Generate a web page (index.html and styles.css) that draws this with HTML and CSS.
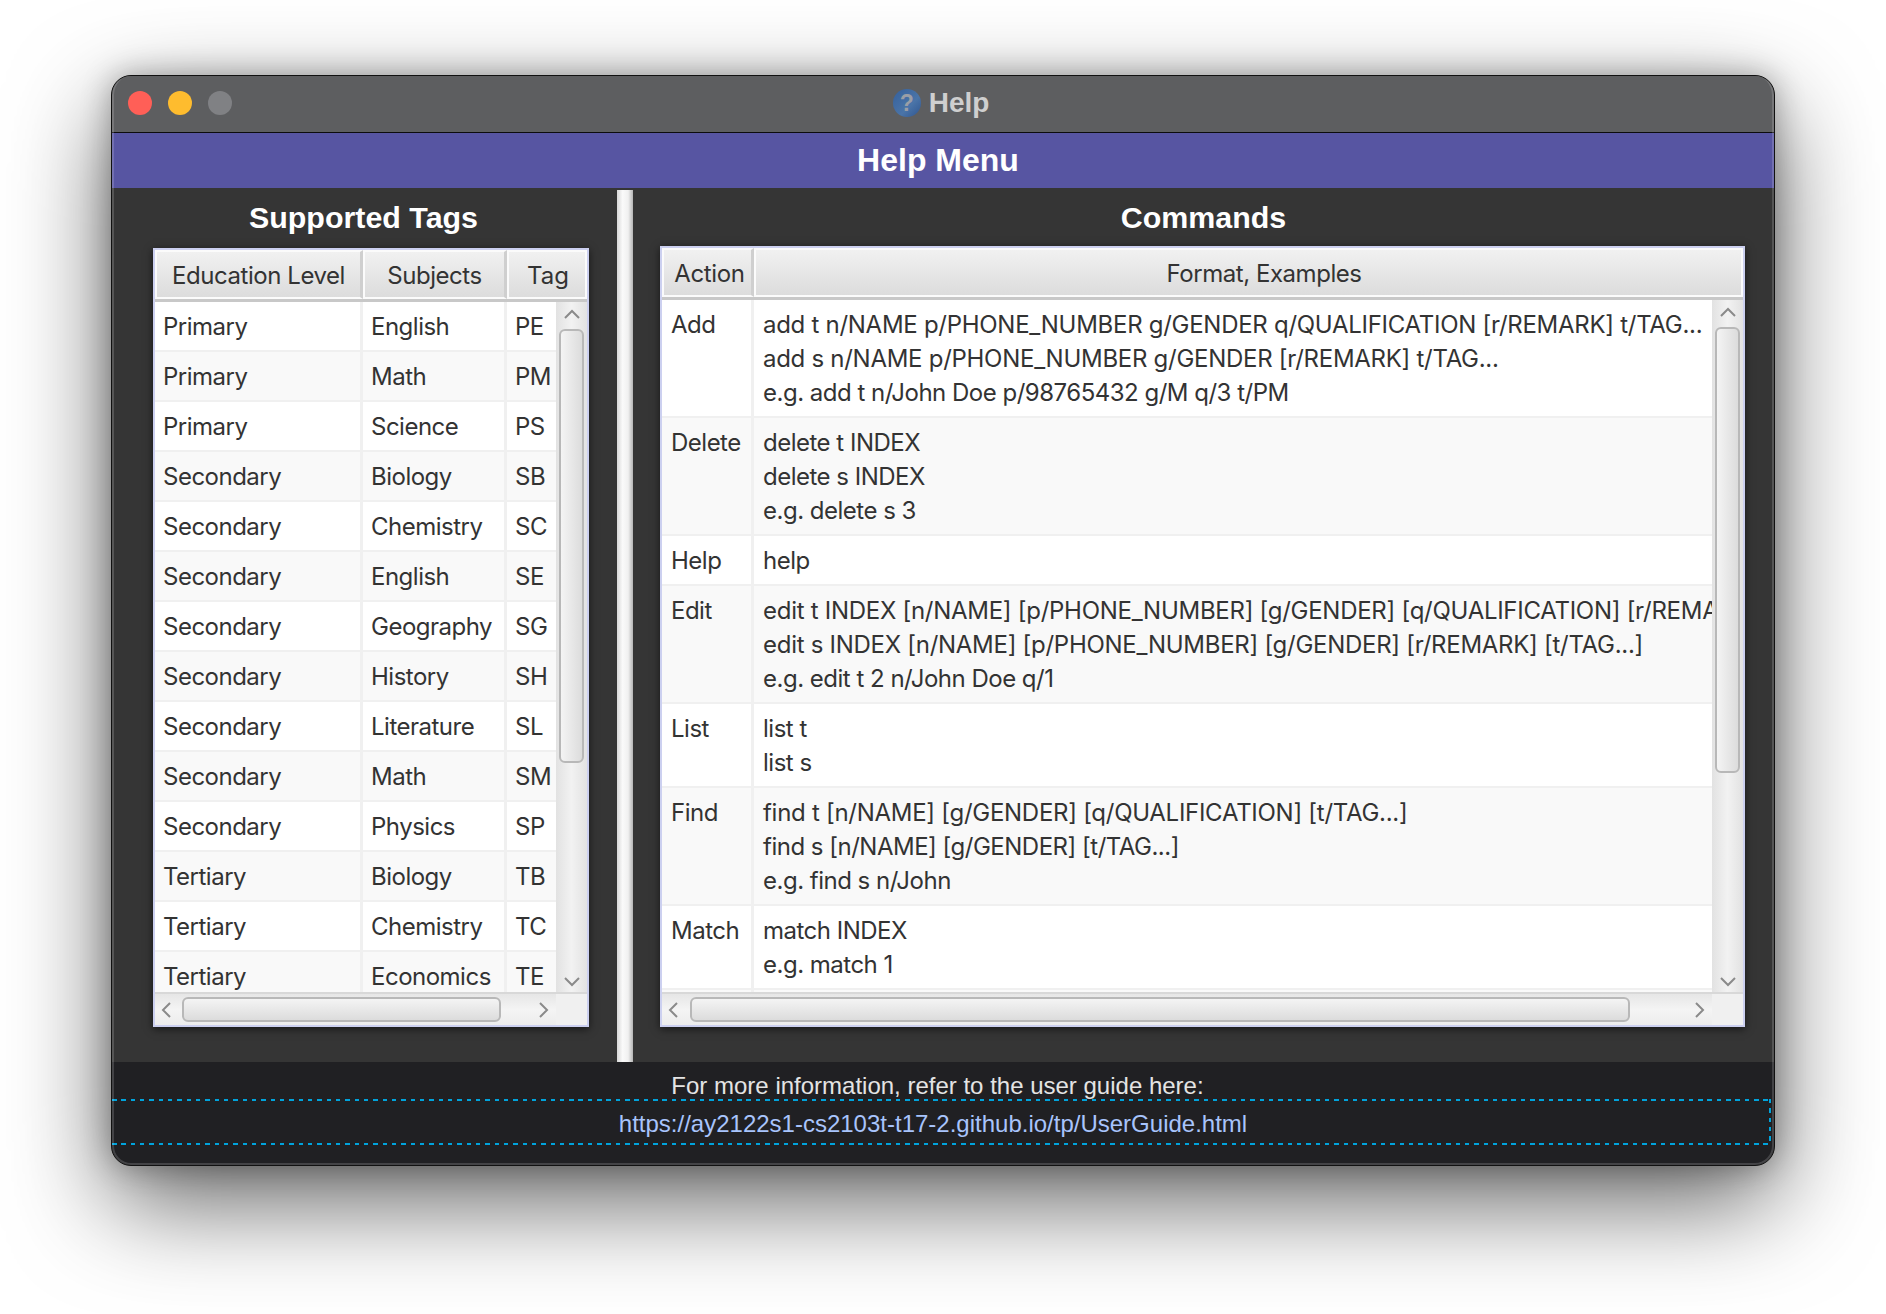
FILE: index.html
```html
<!DOCTYPE html>
<html lang="en">
<head>
    <meta charset="UTF-8">
    <title>Help</title>
    <link rel="stylesheet" href="styles.css">
</head>
<body>
<div class="window">
    <div class="titlebar">
        <div class="lights">
            <span class="light red"></span>
            <span class="light yellow"></span>
            <span class="light grey"></span>
        </div>
        <div class="title"><span class="helpIcon">?</span>Help</div>
    </div>
    <div class="banner">Help Menu</div>

    <div class="main">
        <!-- Supported tags -->
        <div class="panel leftPanel">
            <h2>Supported Tags</h2>
            <div class="tableBox tagsBox">
                <div class="headRow">
                    <div class="headCell tagCol1">Education Level</div>
                    <div class="headCell tagCol2">Subjects</div>
                    <div class="headCell tagCol3">Tag</div>
                </div>
                <div class="bodyRow">
                    <div class="rows">
                        <div class="row"><div class="cell tagCol1">Primary</div><div class="cell tagCol2">English</div><div class="cell tagCol3">PE</div></div>
                        <div class="row"><div class="cell tagCol1">Primary</div><div class="cell tagCol2">Math</div><div class="cell tagCol3">PM</div></div>
                        <div class="row"><div class="cell tagCol1">Primary</div><div class="cell tagCol2">Science</div><div class="cell tagCol3">PS</div></div>
                        <div class="row"><div class="cell tagCol1">Secondary</div><div class="cell tagCol2">Biology</div><div class="cell tagCol3">SB</div></div>
                        <div class="row"><div class="cell tagCol1">Secondary</div><div class="cell tagCol2">Chemistry</div><div class="cell tagCol3">SC</div></div>
                        <div class="row"><div class="cell tagCol1">Secondary</div><div class="cell tagCol2">English</div><div class="cell tagCol3">SE</div></div>
                        <div class="row"><div class="cell tagCol1">Secondary</div><div class="cell tagCol2">Geography</div><div class="cell tagCol3">SG</div></div>
                        <div class="row"><div class="cell tagCol1">Secondary</div><div class="cell tagCol2">History</div><div class="cell tagCol3">SH</div></div>
                        <div class="row"><div class="cell tagCol1">Secondary</div><div class="cell tagCol2">Literature</div><div class="cell tagCol3">SL</div></div>
                        <div class="row"><div class="cell tagCol1">Secondary</div><div class="cell tagCol2">Math</div><div class="cell tagCol3">SM</div></div>
                        <div class="row"><div class="cell tagCol1">Secondary</div><div class="cell tagCol2">Physics</div><div class="cell tagCol3">SP</div></div>
                        <div class="row"><div class="cell tagCol1">Tertiary</div><div class="cell tagCol2">Biology</div><div class="cell tagCol3">TB</div></div>
                        <div class="row"><div class="cell tagCol1">Tertiary</div><div class="cell tagCol2">Chemistry</div><div class="cell tagCol3">TC</div></div>
                        <div class="row"><div class="cell tagCol1">Tertiary</div><div class="cell tagCol2">Economics</div><div class="cell tagCol3">TE</div></div>
                    </div>
                    <div class="vBar">
                        <svg class="arrow" width="18" height="10" viewBox="0 0 18 10"><path d="M2 9 L9 2 L16 9" /></svg>
                        <div class="vThumb tagsThumb"></div>
                        <svg class="arrow arrowBottom" width="18" height="10" viewBox="0 0 18 10"><path d="M2 1 L9 8 L16 1" /></svg>
                    </div>
                </div>
                <div class="hRow">
                    <div class="hBar">
                        <svg class="arrow" width="10" height="18" viewBox="0 0 10 18"><path d="M9 2 L2 9 L9 16" /></svg>
                        <div class="hThumb tagsHThumb"></div>
                        <svg class="arrow arrowRight" width="10" height="18" viewBox="0 0 10 18"><path d="M1 2 L8 9 L1 16" /></svg>
                    </div>
                    <div class="corner"></div>
                </div>
            </div>
        </div>

        <div class="splitter"></div>

        <!-- Commands -->
        <div class="panel rightPanel">
            <h2>Commands</h2>
            <div class="tableBox commandsBox">
                <div class="headRow">
                    <div class="headCell cmdCol1">Action</div>
                    <div class="headCell cmdHeadCol2">Format, Examples</div>
                </div>
                <div class="bodyRow">
                    <div class="rows">
                        <div class="row cmdRow"><div class="cell cmdCol1">Add</div><div class="cell cmdCol2"><span class="capsLine">add t n/NAME p/PHONE_NUMBER g/GENDER q/QUALIFICATION [r/REMARK] t/TAG...</span>
<span class="capsLine">add s n/NAME p/PHONE_NUMBER g/GENDER [r/REMARK] t/TAG...</span>
e.g. add t n/John Doe p/98765432 g/M q/3 t/PM</div></div>
                        <div class="row cmdRow"><div class="cell cmdCol1">Delete</div><div class="cell cmdCol2">delete t INDEX
delete s INDEX
e.g. delete s 3</div></div>
                        <div class="row cmdRow"><div class="cell cmdCol1">Help</div><div class="cell cmdCol2">help</div></div>
                        <div class="row cmdRow"><div class="cell cmdCol1">Edit</div><div class="cell cmdCol2"><span class="capsLine">edit t INDEX [n/NAME] [p/PHONE_NUMBER] [g/GENDER] [q/QUALIFICATION] [r/REMARK] [t/TAG...]</span>
<span class="capsLine">edit s INDEX [n/NAME] [p/PHONE_NUMBER] [g/GENDER] [r/REMARK] [t/TAG...]</span>
e.g. edit t 2 n/John Doe q/1</div></div>
                        <div class="row cmdRow"><div class="cell cmdCol1">List</div><div class="cell cmdCol2">list t
list s</div></div>
                        <div class="row cmdRow"><div class="cell cmdCol1">Find</div><div class="cell cmdCol2"><span class="capsLine">find t [n/NAME] [g/GENDER] [q/QUALIFICATION] [t/TAG...]</span>
find s [n/NAME] [g/GENDER] [t/TAG...]
e.g. find s n/John</div></div>
                        <div class="row cmdRow"><div class="cell cmdCol1">Match</div><div class="cell cmdCol2">match INDEX
e.g. match 1</div></div>
                        <div class="row cmdRow"><div class="cell cmdCol1"></div><div class="cell cmdCol2"></div></div>
                    </div>
                    <div class="vBar">
                        <svg class="arrow" width="18" height="10" viewBox="0 0 18 10"><path d="M2 9 L9 2 L16 9" /></svg>
                        <div class="vThumb cmdThumb"></div>
                        <svg class="arrow arrowBottom" width="18" height="10" viewBox="0 0 18 10"><path d="M2 1 L9 8 L16 1" /></svg>
                    </div>
                </div>
                <div class="hRow">
                    <div class="hBar">
                        <svg class="arrow" width="10" height="18" viewBox="0 0 10 18"><path d="M9 2 L2 9 L9 16" /></svg>
                        <div class="hThumb cmdHThumb"></div>
                        <svg class="arrow arrowRight" width="10" height="18" viewBox="0 0 10 18"><path d="M1 2 L8 9 L1 16" /></svg>
                    </div>
                    <div class="corner"></div>
                </div>
            </div>
        </div>
    </div>

    <div class="footer">
        <div class="footerText">For more information, refer to the user guide here:</div>
        <div class="footerLink">https://ay2122s1-cs2103t-t17-2.github.io/tp/UserGuide.html</div>
    </div>
</div>
</body>
</html>
```

FILE: styles.css
```css
html, body {
    margin: 0;
    height: 100%;
}
body {
    background-color: #fff;
    padding: 75px 0 0 111px;
    box-sizing: border-box;
    overflow: hidden;
    font-family: "Liberation Sans", Arial, sans-serif;
}
.window {
    width: 1664px;
    height: 1091px;
    box-sizing: border-box;
    border: 1px solid #111;
    border-radius: 20px;
    overflow: hidden;
    display: flex;
    flex-direction: column;
    position: relative;
    background-color: #353535;
    box-shadow: 0 36px 100px rgba(0, 0, 0, 0.62), 0 0 30px rgba(0, 0, 0, 0.3);
}
/* the lighter inner rim of the window frame */
.window::after {
    content: "";
    position: absolute;
    inset: 0;
    border: 2px solid rgba(255, 255, 255, 0.16);
    border-top-width: 0;
    border-radius: 19px;
    pointer-events: none;
}

/* title bar */
.titlebar {
    height: 56px;
    flex: none;
    display: flex;
    align-items: center;
    justify-content: center;
    position: relative;
    background-color: #5d5e60;
    border-bottom: 1px solid #0c0c0c;
    border-top: 1px solid #6c6d6f;
    box-sizing: content-box;
    margin-top: -1px;
}
.lights {
    position: absolute;
    left: 16px;
    top: 15px;
    display: flex;
    gap: 16px;
}
.light {
    width: 24px;
    height: 24px;
    border-radius: 50%;
}
.red { background-color: #ff5f57; }
.yellow { background-color: #febc2e; }
.grey { background-color: #808184; }
.title {
    display: flex;
    align-items: center;
    gap: 8px;
    color: #cfcfcf;
    font-size: 28px;
    font-weight: bold;
    margin-right: 4px;
    margin-top: -2px;
}
.helpIcon {
    width: 28px;
    height: 28px;
    border-radius: 50%;
    background: linear-gradient(135deg, #34609c, #4a74a8 60%, #2f5590);
    color: #9a9ea6;
    font-size: 23px;
    text-align: center;
    line-height: 28px;
}

.banner {
    height: 55px;
    flex: none;
    background-color: #5755a2;
    color: #fff;
    font-size: 32px;
    font-weight: bold;
    text-align: center;
    line-height: 55px;
    padding-right: 10px;
}

/* panels */
.main {
    flex: 1;
    min-height: 0;
    display: flex;
    background-color: #353535;
}
.panel {
    display: flex;
    flex-direction: column;
    min-width: 0;
}
.panel h2 {
    margin: 0;
    height: 60px;
    line-height: 58px;
    color: #fff;
    font-size: 30.4px;
    text-align: center;
}
.leftPanel {
    width: 505px;
}
.leftPanel h2 {
    padding-right: 2px;
}
.rightPanel {
    flex: 1;
}
.splitter {
    width: 16px;
    margin-top: 2px;
    flex: none;
    background: linear-gradient(to right, #d8d8d8, #fafafa 35%, #f0f0f0 70%, #b4b4b4);
}
.tableBox {
    box-sizing: border-box;
    height: 779px;
    border: 2px solid #ccd0f0;
    background-color: #f4f4f4;
    display: flex;
    flex-direction: column;
    box-shadow: 0 2px 8px rgba(0, 0, 0, 0.6);
    font-family: Inter, "Liberation Sans", sans-serif;
    font-size: 24px;
    letter-spacing: -0.5px;
    color: #333;
}
.tagsBox {
    width: 436px;
    margin-left: 41px;
}
.commandsBox {
    width: 1085px;
    margin-left: 27px;
    height: 781px;
    margin-top: -2px;
}

/* table header */
.headRow {
    flex: none;
    height: 52px;
    display: flex;
    box-sizing: border-box;
    background-color: #fff;
    border-bottom: 3px solid #c8c8c8;
}
.headCell {
    box-sizing: border-box;
    background: linear-gradient(#f1f1f1, #dcdcdc);
    border: 2px solid #fbfbfb;
    border-right: 3px solid #cfcfcf;
    text-align: center;
    line-height: 47px;
    letter-spacing: -0.45px;
    white-space: nowrap;
    overflow: hidden;
}
.headCell:last-child {
    border-right: 2px solid #fbfbfb;
    flex: 1;
}
.headCell.tagCol3 {
    padding-left: 2px;
    letter-spacing: 0;
}
.headCell.cmdCol1 {
    padding-left: 4px;
    letter-spacing: -0.35px;
}

/* columns */
.tagCol1 { width: 208px; }
.tagCol2 { width: 144px; }
.tagCol3 { width: 49px; }
.cmdCol1 { width: 92px; }
.cmdCol2 { flex: 1; }
.cmdHeadCol2 {
    flex: 1;
    padding-left: 31px;
}

/* table body */
.bodyRow {
    flex: 1;
    min-height: 0;
    display: flex;
}
.rows {
    flex: 1;
    min-width: 0;
    overflow: hidden;
    background-color: #fff;
}
.row {
    display: flex;
    height: 50px;
    box-sizing: border-box;
    background-color: #fff;
    border-bottom: 2px solid #f0f0f0;
}
.row:nth-child(even) {
    background-color: #f9f9f9;
}
.cmdRow {
    height: auto;
    min-height: 50px;
}
.cell {
    box-sizing: border-box;
    padding: 1px 8px 0;
    line-height: 48px;
    border-right: 3px solid #f0f0f0;
    white-space: nowrap;
    overflow: hidden;
}
.cell:last-child {
    border-right: none;
}
.tagCol3 {
    flex: 1;
}
.cmdRow .cell {
    line-height: 34px;
    padding: 8.4px 9px 5.6px;
    white-space: pre;
}
/* lines full of capitals run a little wider in the original */
.capsLine {
    letter-spacing: -0.28px;
}

/* scroll bars */
.vBar {
    width: 31px;
    flex: none;
    display: flex;
    flex-direction: column;
    align-items: center;
    background: linear-gradient(to right, #e2e2e2, #f2f2f2 50%, #e2e2e2);
}
.vBar .arrow {
    margin-top: 7px;
    flex: none;
}
.vBar .arrowBottom {
    margin-top: auto;
    margin-bottom: 5px;
}
.vThumb {
    width: 25px;
    box-sizing: border-box;
    margin-top: 10px;
    border: 2px solid #b8b8b8;
    border-radius: 6px;
    background: linear-gradient(to right, #f4f4f4, #dcdcdc);
}
.tagsThumb { height: 434px; }
.cmdThumb { height: 446px; }
.hRow {
    flex: none;
    height: 31px;
    display: flex;
    border-top: 2px solid #d8d8d8;
}
.hBar {
    flex: 1;
    display: flex;
    align-items: center;
    background: linear-gradient(#e6e6e6, #f4f4f4 50%, #ececec);
    padding: 0 8px 0 6px;
}
.corner {
    width: 31px;
    flex: none;
    background-color: #f0f0f0;
}
.hThumb {
    height: 25px;
    box-sizing: border-box;
    border: 2px solid #b8b8b8;
    border-radius: 6px;
    background: linear-gradient(#f4f4f4, #dcdcdc);
}
.tagsHThumb {
    width: 319px;
    margin-left: 11px;
}
.cmdHThumb {
    width: 940px;
    margin-left: 12px;
}
.arrow {
    flex: none;
}
.arrow path {
    fill: none;
    stroke: #8a8a8a;
    stroke-width: 2;
}
.arrowRight {
    margin-left: auto;
    margin-right: -1px;
}

/* footer */
.footer {
    flex: none;
    height: 103px;
    box-sizing: border-box;
    background-color: #202023;
    color: #e4e4e4;
    font-size: 24px;
    text-align: center;
    padding-top: 8px;
}
.footerText {
    height: 29px;
    line-height: 31px;
    padding-right: 11px;
}
.footerLink {
    height: 46px;
    line-height: 49px;
    box-sizing: border-box;
    margin-right: 3px;
    color: #a8c4fc;
    padding-right: 17px;
    background-image:
        repeating-linear-gradient(to right, #00a3dc 0 4.5px, transparent 4.5px 9.33px),
        repeating-linear-gradient(to right, #00a3dc 0 4.5px, transparent 4.5px 9.33px),
        repeating-linear-gradient(to bottom, #00a3dc 0 4.5px, transparent 4.5px 9.33px);
    background-size: 100% 2px, 100% 2px, 2px 100%;
    background-position: left top, left bottom, right top;
    background-repeat: no-repeat;
}
```
